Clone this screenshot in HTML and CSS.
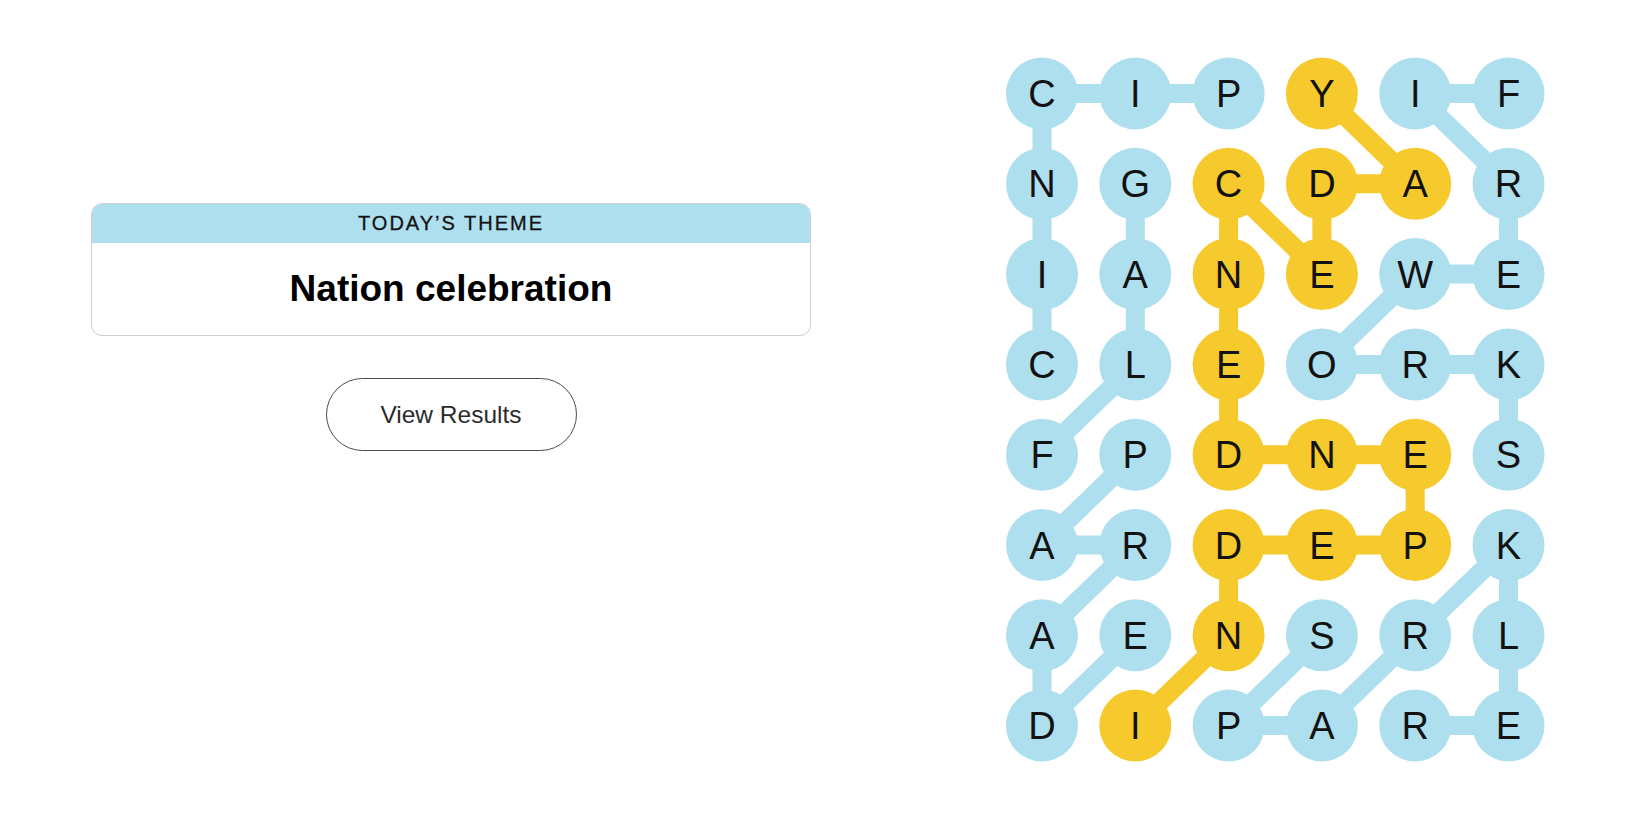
FILE: index.html
```html
<!DOCTYPE html>
<html lang="en">
<head>
<meta charset="utf-8">
<title>Strands</title>
<link rel="stylesheet" href="styles.css">
</head>
<body>
<main class="page">
  <section class="left">
    <div class="card">
      <div class="card-head">TODAY’S THEME</div>
      <div class="card-body">Nation celebration</div>
    </div>
    <button class="results-btn">View Results</button>
  </section>
  <section class="right">
    <svg class="board" width="640" height="770" viewBox="0 0 640 770" xmlns="http://www.w3.org/2000/svg">
      <g class="links blue">
        <polyline points="268.6,53.5 175.3,53.5 82,53.5 82,143.8 82,234.1 82,324.4"/>
        <polyline points="82,414.7 175.3,324.4 175.3,234.1 175.3,143.8"/>
        <polyline points="175.3,414.7 82,505 175.3,505 82,595.3 82,685.6 175.3,595.3"/>
        <polyline points="548.5,53.5 455.2,53.5 548.5,143.8 548.5,234.1 455.2,234.1 361.9,324.4 455.2,324.4 548.5,324.4 548.5,414.7"/>
        <polyline points="361.9,595.3 268.6,685.6 361.9,685.6 455.2,595.3 548.5,505 548.5,595.3 548.5,685.6 455.2,685.6"/>
      </g>
      <g class="links gold">
        <polyline points="175.3,685.6 268.6,595.3 268.6,505 361.9,505 455.2,505 455.2,414.7 361.9,414.7 268.6,414.7 268.6,324.4 268.6,234.1 268.6,143.8 361.9,234.1 361.9,143.8 455.2,143.8 361.9,53.5"/>
      </g>
      <g class="dots">
        <circle class="b" cx="82" cy="53.5" r="36"/><circle class="b" cx="175.3" cy="53.5" r="36"/><circle class="b" cx="268.6" cy="53.5" r="36"/><circle class="y" cx="361.9" cy="53.5" r="36"/><circle class="b" cx="455.2" cy="53.5" r="36"/><circle class="b" cx="548.5" cy="53.5" r="36"/>
        <circle class="b" cx="82" cy="143.8" r="36"/><circle class="b" cx="175.3" cy="143.8" r="36"/><circle class="y" cx="268.6" cy="143.8" r="36"/><circle class="y" cx="361.9" cy="143.8" r="36"/><circle class="y" cx="455.2" cy="143.8" r="36"/><circle class="b" cx="548.5" cy="143.8" r="36"/>
        <circle class="b" cx="82" cy="234.1" r="36"/><circle class="b" cx="175.3" cy="234.1" r="36"/><circle class="y" cx="268.6" cy="234.1" r="36"/><circle class="y" cx="361.9" cy="234.1" r="36"/><circle class="b" cx="455.2" cy="234.1" r="36"/><circle class="b" cx="548.5" cy="234.1" r="36"/>
        <circle class="b" cx="82" cy="324.4" r="36"/><circle class="b" cx="175.3" cy="324.4" r="36"/><circle class="y" cx="268.6" cy="324.4" r="36"/><circle class="b" cx="361.9" cy="324.4" r="36"/><circle class="b" cx="455.2" cy="324.4" r="36"/><circle class="b" cx="548.5" cy="324.4" r="36"/>
        <circle class="b" cx="82" cy="414.7" r="36"/><circle class="b" cx="175.3" cy="414.7" r="36"/><circle class="y" cx="268.6" cy="414.7" r="36"/><circle class="y" cx="361.9" cy="414.7" r="36"/><circle class="y" cx="455.2" cy="414.7" r="36"/><circle class="b" cx="548.5" cy="414.7" r="36"/>
        <circle class="b" cx="82" cy="505" r="36"/><circle class="b" cx="175.3" cy="505" r="36"/><circle class="y" cx="268.6" cy="505" r="36"/><circle class="y" cx="361.9" cy="505" r="36"/><circle class="y" cx="455.2" cy="505" r="36"/><circle class="b" cx="548.5" cy="505" r="36"/>
        <circle class="b" cx="82" cy="595.3" r="36"/><circle class="b" cx="175.3" cy="595.3" r="36"/><circle class="y" cx="268.6" cy="595.3" r="36"/><circle class="b" cx="361.9" cy="595.3" r="36"/><circle class="b" cx="455.2" cy="595.3" r="36"/><circle class="b" cx="548.5" cy="595.3" r="36"/>
        <circle class="b" cx="82" cy="685.6" r="36"/><circle class="y" cx="175.3" cy="685.6" r="36"/><circle class="b" cx="268.6" cy="685.6" r="36"/><circle class="b" cx="361.9" cy="685.6" r="36"/><circle class="b" cx="455.2" cy="685.6" r="36"/><circle class="b" cx="548.5" cy="685.6" r="36"/>
      </g>
      <g class="letters">
        <text x="82" y="67">C</text><text x="175.3" y="67">I</text><text x="268.6" y="67">P</text><text x="361.9" y="67">Y</text><text x="455.2" y="67">I</text><text x="548.5" y="67">F</text>
        <text x="82" y="157.3">N</text><text x="175.3" y="157.3">G</text><text x="268.6" y="157.3">C</text><text x="361.9" y="157.3">D</text><text x="455.2" y="157.3">A</text><text x="548.5" y="157.3">R</text>
        <text x="82" y="247.6">I</text><text x="175.3" y="247.6">A</text><text x="268.6" y="247.6">N</text><text x="361.9" y="247.6">E</text><text x="455.2" y="247.6">W</text><text x="548.5" y="247.6">E</text>
        <text x="82" y="337.9">C</text><text x="175.3" y="337.9">L</text><text x="268.6" y="337.9">E</text><text x="361.9" y="337.9">O</text><text x="455.2" y="337.9">R</text><text x="548.5" y="337.9">K</text>
        <text x="82" y="428.2">F</text><text x="175.3" y="428.2">P</text><text x="268.6" y="428.2">D</text><text x="361.9" y="428.2">N</text><text x="455.2" y="428.2">E</text><text x="548.5" y="428.2">S</text>
        <text x="82" y="518.5">A</text><text x="175.3" y="518.5">R</text><text x="268.6" y="518.5">D</text><text x="361.9" y="518.5">E</text><text x="455.2" y="518.5">P</text><text x="548.5" y="518.5">K</text>
        <text x="82" y="608.8">A</text><text x="175.3" y="608.8">E</text><text x="268.6" y="608.8">N</text><text x="361.9" y="608.8">S</text><text x="455.2" y="608.8">R</text><text x="548.5" y="608.8">L</text>
        <text x="82" y="699.1">D</text><text x="175.3" y="699.1">I</text><text x="268.6" y="699.1">P</text><text x="361.9" y="699.1">A</text><text x="455.2" y="699.1">R</text><text x="548.5" y="699.1">E</text>
      </g>
    </svg>
  </section>
</main>
</body>
</html>
```

FILE: styles.css
```css
html, body {
  margin: 0;
  padding: 0;
  background: #ffffff;
}

body {
  font-family: "Liberation Sans", Arial, sans-serif;
  color: #121212;
}

.page {
  display: flex;
  width: 1650px;
  height: 825px;
  overflow: hidden;
}

.left {
  width: 902px;
  flex: 0 0 902px;
  display: flex;
  flex-direction: column;
  align-items: center;
  padding-top: 203px;
  box-sizing: border-box;
}

.card {
  width: 720px;
  border: 1px solid #cfcfcf;
  border-radius: 11px;
  overflow: hidden;
  box-sizing: border-box;
}

.card-head {
  height: 39px;
  background: #aedfee;
  display: flex;
  align-items: center;
  justify-content: center;
  font-size: 20px;
  letter-spacing: 2px;
  color: #121212;
  -webkit-text-stroke: 0.3px #121212;
}

.card-body {
  height: 92px;
  display: flex;
  align-items: center;
  justify-content: center;
  font-size: 37px;
  font-weight: 700;
  color: #000000;
}

.results-btn {
  margin-top: 42px;
  width: 251px;
  height: 73px;
  border: 1px solid #4a4a4a;
  border-radius: 37px;
  background: #ffffff;
  font-family: "Liberation Sans", Arial, sans-serif;
  font-size: 24.5px;
  color: #2b2b2b;
  padding: 0;
}

.right {
  flex: 1;
  padding-top: 40px;
  padding-left: 58px;
}

.board {
  display: block;
}

.links polyline {
  fill: none;
  stroke-width: 19;
  stroke-linejoin: round;
  stroke-linecap: round;
}

.links.blue polyline {
  stroke: #aedfee;
}

.links.gold polyline {
  stroke: #f6c92c;
}

.dots .b {
  fill: #aedfee;
}

.dots .y {
  fill: #f6c92c;
}

.letters text {
  font-family: "Liberation Sans", Arial, sans-serif;
  font-size: 38px;
  text-anchor: middle;
  fill: #121212;
}
```
